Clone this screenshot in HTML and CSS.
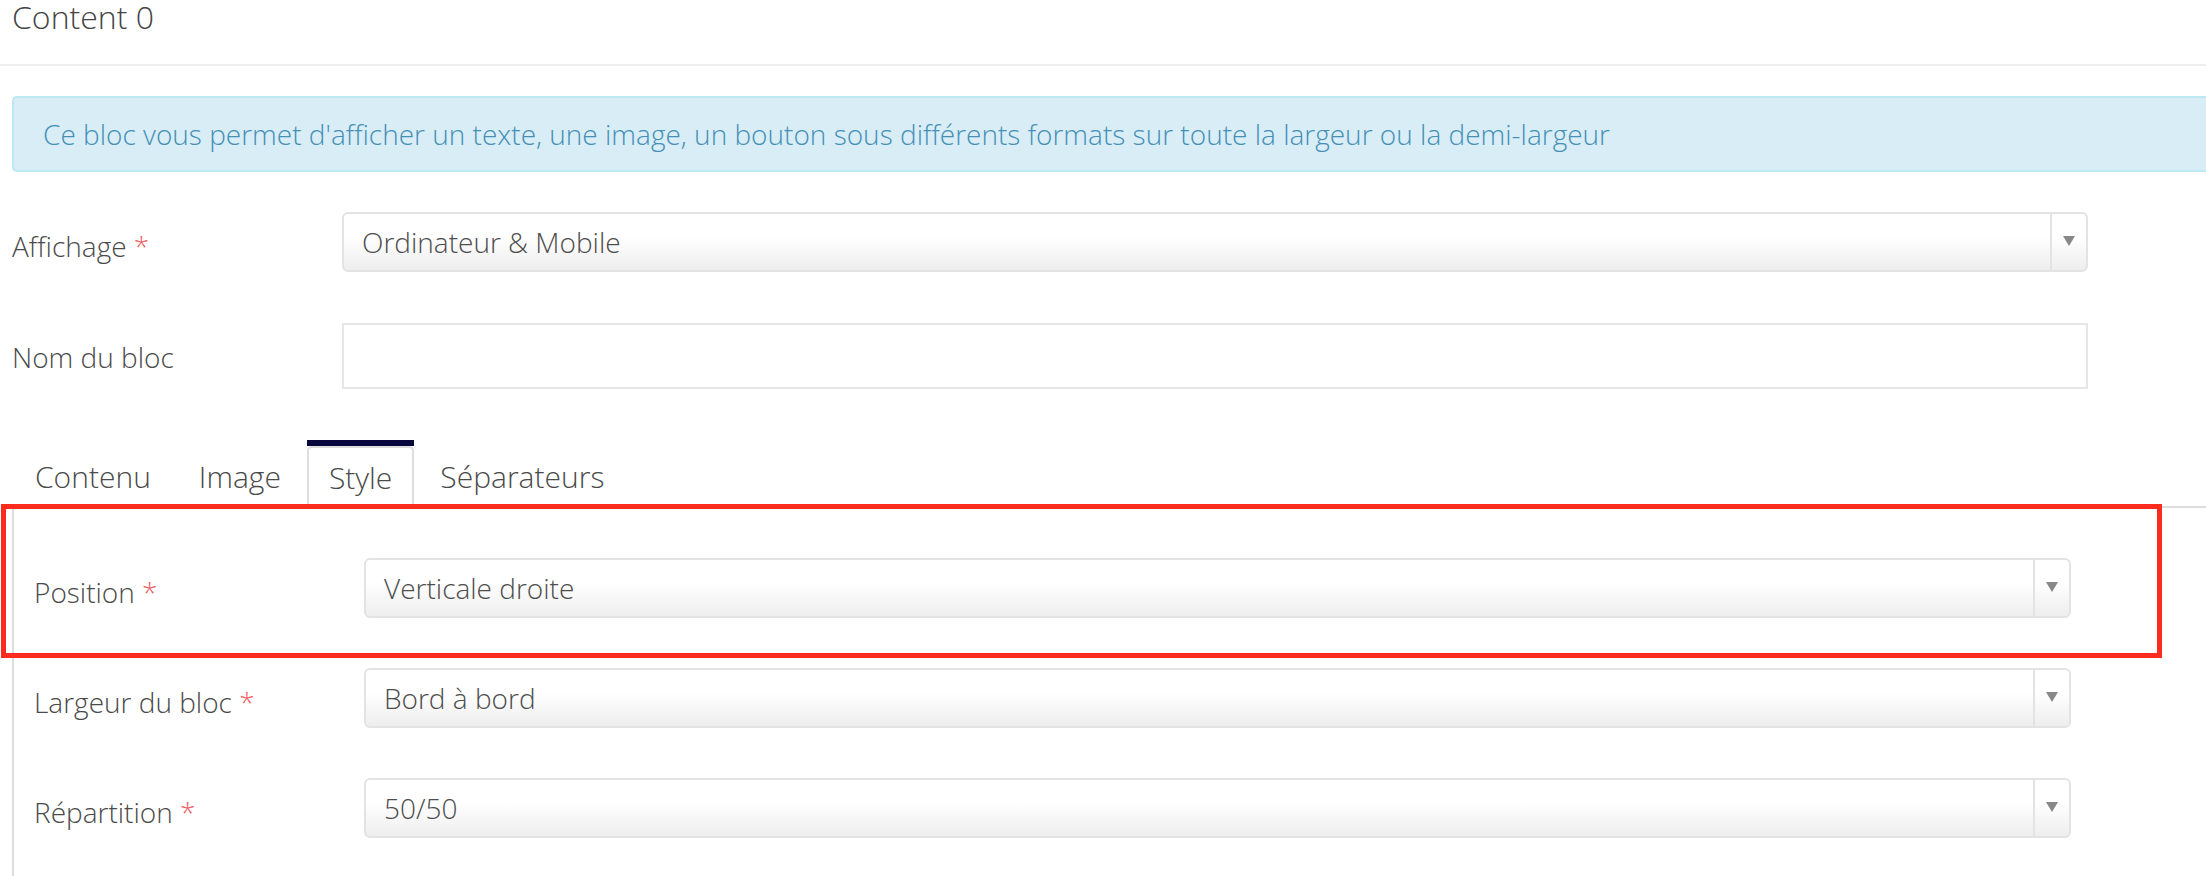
FILE: index.html
```html
<!DOCTYPE html>
<html lang="fr">
<head>
<meta charset="utf-8">
<title>Content 0</title>
<link rel="stylesheet" href="styles.css">
</head>
<body>
<div class="page">
  <header class="head">
    <h1 class="title">Content 0</h1>
  </header>
  <div class="body">
    <div class="alert">Ce bloc vous permet d'afficher un texte, une image, un bouton sous différents formats sur toute la largeur ou la demi-largeur</div>

    <div class="form-row outer">
      <label class="label">Affichage <span class="req">*</span></label>
      <div class="select">
        <span class="select-text">Ordinateur &amp; Mobile</span>
        <span class="select-arrow"><svg width="12" height="10" viewBox="0 0 12 10"><path d="M0 0H12L6 10Z" fill="#888"/></svg></span>
      </div>
    </div>

    <div class="form-row outer">
      <label class="label">Nom du bloc</label>
      <div class="input"></div>
    </div>

    <div class="tabs">
      <nav class="tab-nav">
        <span class="tab">Contenu</span>
        <span class="tab">Image</span>
        <span class="tab-active"><span class="tab">Style</span></span>
        <span class="tab">Séparateurs</span>
      </nav>
      <div class="tab-pane">
        <div class="form-row inner">
          <label class="label">Position <span class="req">*</span></label>
          <div class="select">
            <span class="select-text">Verticale droite</span>
            <span class="select-arrow"><svg width="12" height="10" viewBox="0 0 12 10"><path d="M0 0H12L6 10Z" fill="#888"/></svg></span>
          </div>
        </div>
        <div class="form-row inner">
          <label class="label">Largeur du bloc <span class="req">*</span></label>
          <div class="select">
            <span class="select-text">Bord à bord</span>
            <span class="select-arrow"><svg width="12" height="10" viewBox="0 0 12 10"><path d="M0 0H12L6 10Z" fill="#888"/></svg></span>
          </div>
        </div>
        <div class="form-row inner">
          <label class="label">Répartition <span class="req">*</span></label>
          <div class="select">
            <span class="select-text">50/50</span>
            <span class="select-arrow"><svg width="12" height="10" viewBox="0 0 12 10"><path d="M0 0H12L6 10Z" fill="#888"/></svg></span>
          </div>
        </div>
      </div>
    </div>
  </div>
  <div class="highlight"></div>
</div>
</body>
</html>
```

FILE: styles.css
```css
html, body {
  margin: 0;
  padding: 0;
  background: #fff;
  overflow: hidden;
}

.page {
  position: relative;
  width: 2300px;
  height: 876px;
  font-family: "Open Sans", "Noto Sans", sans-serif;
  font-weight: 300;
  color: #4a4a4a;
}

.head {
  height: 66px;
  border-bottom: 2px solid #eeeeee;
  padding-left: 12px;
  padding-top: 1px;
  box-sizing: border-box;
}

.title {
  margin: 0;
  font-size: 32px;
  line-height: 32px;
  font-weight: 300;
  color: #444;
}

.body {
  padding-left: 12px;
}

.alert {
  margin-top: 30px;
  height: 76px;
  box-sizing: border-box;
  padding: 16px 29px;
  border: 2px solid #bce8f1;
  border-right: none;
  border-radius: 5px 0 0 5px;
  background: #d9edf7;
  color: #4590b6;
  font-size: 28px;
  line-height: 40px;
  white-space: nowrap;
}

.form-row {
  display: grid;
  align-items: start;
}

.form-row.outer {
  grid-template-columns: 330px 1746px;
  margin-top: 40px;
}

.form-row.outer + .form-row.outer {
  margin-top: 51px;
}

.form-row.inner {
  grid-template-columns: 330px 1707px;
  margin-bottom: 50px;
}

.label {
  font-size: 28px;
  line-height: 52px;
  padding-top: 8px;
  color: #4a4a4a;
}

.req {
  color: #ee6266;
}

.select {
  display: flex;
  height: 60px;
  box-sizing: border-box;
  border: 2px solid #e3e3e3;
  border-radius: 6px;
  background: linear-gradient(#ffffff 40%, #eeeeee 100%);
}

.select-text {
  flex: 1;
  padding-left: 18px;
  font-size: 28px;
  line-height: 56px;
  color: #4d4d4d;
}

.select-arrow {
  width: 34px;
  border-left: 2px solid #e3e3e3;
  display: flex;
  align-items: center;
  justify-content: center;
  padding-bottom: 2px;
}

.input {
  height: 66px;
  box-sizing: border-box;
  border: 2px solid #e6e6e6;
  background: #fff;
}

.tabs {
  margin-top: 51px;
}

.tab-nav {
  display: flex;
  align-items: flex-end;
  height: 68px;
  box-sizing: border-box;
  border-bottom: 2px solid #dddddd;
  padding-left: 1px;
}

.tab {
  display: block;
  padding: 0 20px;
  margin-right: 4px;
  font-size: 30px;
  line-height: 58px;
  border: 2px solid transparent;
  border-bottom: none;
  color: #4a4a4a;
}

.tab-active {
  display: block;
  border-top: 6px solid #07073d;
  margin-right: 4px;
  margin-bottom: -2px;
}

.tab-active .tab {
  margin-right: 0;
  border-color: #dddddd;
  border-radius: 5px 5px 0 0;
  background: #fff;
  line-height: 60px;
}

.tab-pane {
  border-left: 2px solid #dddddd;
  padding-left: 20px;
  padding-top: 50px;
  height: 400px;
}

.highlight {
  position: absolute;
  left: 1px;
  top: 504px;
  width: 2161px;
  height: 154px;
  box-sizing: border-box;
  border: 5px solid #fc2b1e;
}
```
